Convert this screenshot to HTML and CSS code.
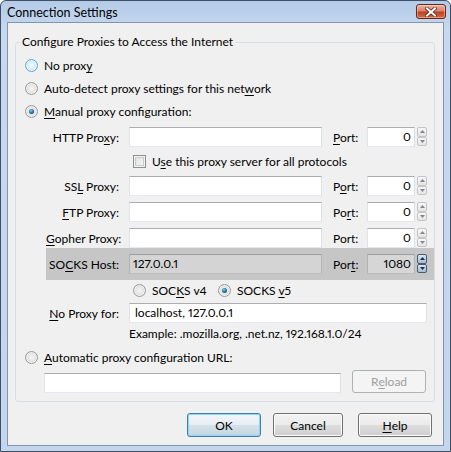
FILE: index.html
```html
<!DOCTYPE html>
<html>
<head>
<meta charset="utf-8">
<link rel="stylesheet" href="styles.css">
</head>
<body>
<div class="window">
  <div class="titlebar">
    <span class="title">Connection Settings</span>
    <span class="close">
      <svg width="12" height="10" viewBox="0 0 12 10">
        <path d="M2 1.5 L10 8.5 M10 1.5 L2 8.5" stroke="#5a2a1e" stroke-width="3.6" stroke-linecap="square"/>
        <path d="M2 1.5 L10 8.5 M10 1.5 L2 8.5" stroke="#fff" stroke-width="2" stroke-linecap="square"/>
      </svg>
    </span>
  </div>
  <div class="client">
    <fieldset class="group">
      <legend>Configure Proxies to Access the Internet</legend>
      <div class="opt"><span class="radio hot"></span><span>No prox<u>y</u></span></div>
      <div class="opt"><span class="radio"></span><span>Auto-detect proxy settings for this net<u>w</u>ork</span></div>
      <div class="opt"><span class="radio on"></span><span><u>M</u>anual proxy configuration:</span></div>

      <div class="proxies">
        <div class="prow">
          <span class="plabel">HTTP Pro<u>x</u>y:</span>
          <span class="field"></span>
          <span class="portlabel"><u>P</u>ort:</span>
          <span class="port"><span class="portbox">0</span><span class="spin"><span class="up"><svg width="5" height="3" viewBox="0 0 5 3"><path d="M0 3 L2.5 0 L5 3Z"/></svg></span><span class="down"><svg width="5" height="3" viewBox="0 0 5 3"><path d="M0 0 L5 0 L2.5 3Z"/></svg></span></span></span>
        </div>
        <div class="crow"><span class="check"></span><span>U<u>s</u>e this proxy server for all protocols</span></div>
        <div class="prow mt5">
          <span class="plabel">SS<u>L</u> Proxy:</span>
          <span class="field"></span>
          <span class="portlabel">P<u>o</u>rt:</span>
          <span class="port"><span class="portbox">0</span><span class="spin"><span class="up"><svg width="5" height="3" viewBox="0 0 5 3"><path d="M0 3 L2.5 0 L5 3Z"/></svg></span><span class="down"><svg width="5" height="3" viewBox="0 0 5 3"><path d="M0 0 L5 0 L2.5 3Z"/></svg></span></span></span>
        </div>
        <div class="prow mt6">
          <span class="plabel"><u>F</u>TP Proxy:</span>
          <span class="field"></span>
          <span class="portlabel">Po<u>r</u>t:</span>
          <span class="port"><span class="portbox">0</span><span class="spin"><span class="up"><svg width="5" height="3" viewBox="0 0 5 3"><path d="M0 3 L2.5 0 L5 3Z"/></svg></span><span class="down"><svg width="5" height="3" viewBox="0 0 5 3"><path d="M0 0 L5 0 L2.5 3Z"/></svg></span></span></span>
        </div>
        <div class="prow mt6">
          <span class="plabel"><u>G</u>opher Proxy:</span>
          <span class="field"></span>
          <span class="portlabel">Port:</span>
          <span class="port"><span class="portbox">0</span><span class="spin"><span class="up"><svg width="5" height="3" viewBox="0 0 5 3"><path d="M0 3 L2.5 0 L5 3Z"/></svg></span><span class="down"><svg width="5" height="3" viewBox="0 0 5 3"><path d="M0 0 L5 0 L2.5 3Z"/></svg></span></span></span>
        </div>
        <div class="prow socks">
          <span class="plabel">SO<u>C</u>KS Host:</span>
          <span class="field">127.0.0.1</span>
          <span class="portlabel">Por<u>t</u>:</span>
          <span class="port"><span class="portbox">1080</span><span class="spin"><span class="up"><svg width="5" height="3" viewBox="0 0 5 3"><path d="M0 3 L2.5 0 L5 3Z"/></svg></span><span class="down"><svg width="5" height="3" viewBox="0 0 5 3"><path d="M0 0 L5 0 L2.5 3Z"/></svg></span></span></span>
        </div>
        <div class="vrow">
          <span class="vitem"><span class="radio"></span><span>SOC<u>K</u>S v4</span></span>
          <span class="vitem"><span class="radio on"></span><span>SOCKS <u>v</u>5</span></span>
        </div>
        <div class="prow mt3">
          <span class="plabel"><u>N</u>o Proxy for:</span>
          <span class="field wide">localhost, 127.0.0.1</span>
        </div>
        <div class="example">Example: .mozilla.org, .net.nz, 192.168.1.0/24</div>
      </div>

      <div class="opt mt1"><span class="radio"></span><span><u>A</u>utomatic proxy configuration URL:</span></div>
      <div class="urlrow">
        <span class="field url"></span>
        <span class="btn disabled">R<u>e</u>load</span>
      </div>
    </fieldset>
    <div class="buttons">
      <span class="btn default ok">OK</span>
      <span class="btn cancel">Cancel</span>
      <span class="btn help"><u>H</u>elp</span>
    </div>
  </div>
</div>
</body>
</html>
```
FILE: styles.css
```css
* { box-sizing: border-box; }
html, body { margin: 0; padding: 0; }
body {
  width: 451px;
  height: 452px;
  overflow: hidden;
  font-family: Lato, "Noto Sans", sans-serif;
  font-size: 12px;
  font-variant-numeric: proportional-nums;
  color: #000;
  background: #fff;
}
u { text-decoration: underline; text-underline-offset: 2px; }

.window {
  width: 451px;
  height: 452px;
  border: 1px solid #3f5066;
  border-radius: 6px 6px 0 0;
  background: linear-gradient(to bottom, #b4cbe7 0px, #c6d9ef 30px, #c3d6ed 100%);
  display: flex;
  flex-direction: column;
  padding: 0 6px 5px 6px;
}
.titlebar {
  height: 21px;
  flex: none;
  display: flex;
  justify-content: space-between;
  align-items: flex-start;
  margin: 0 -6px;
  padding: 0 4px 0 6px;
}
.title { line-height: 16px; padding-top: 4px; font-size: 12.5px; }
.close {
  width: 30px;
  height: 15px;
  margin-top: 3px;
  border: 1px solid #6b2516;
  border-radius: 3px;
  background: linear-gradient(to bottom, #eab4a3 0%, #d9826a 45%, #c4401f 55%, #d46a45 100%);
  display: flex;
  align-items: center;
  justify-content: center;
  box-shadow: inset 0 0 0 1px rgba(255,255,255,0.35);
}
.close svg { display: block; }

.client {
  flex: 1;
  border: 1px solid #8196ad;
  background: #f0f0f0;
  padding: 11px 8px 0 7px;
}

.group {
  margin: 0;
  padding: 0 0 8px 0;
  border: 1px solid #d5dfe5;
  border-radius: 3px;
  min-width: 0;
}
.group legend {
  margin-left: 4px;
  padding: 0 2px;
  line-height: 16px;
}

.opt {
  display: flex;
  align-items: center;
  height: 23px;
  padding-left: 9px;
}
.opt:first-of-type { margin-top: 4px; }
.mt1 { margin-top: 1px; }
.mt3 { margin-top: 3px; }
.mt5 { margin-top: 5px; }
.mt6 { margin-top: 6px; }

.radio {
  position: relative;
  flex: none;
  width: 13px;
  height: 13px;
  margin-right: 6px;
  border-radius: 50%;
  border: 1px solid #9a9a9a;
  background: radial-gradient(circle at 50% 50%, #f6f6f6 0%, #e6e6e6 45%, #cdcdcd 75%, #bdbdbd 100%);
  box-shadow: inset 0 0 0 1px #f4f4f4;
}
.radio.hot {
  border-color: #6aa7cf;
  background: radial-gradient(circle at 50% 50%, #f2fbff 0%, #d6f0fd 45%, #aedcf4 80%, #8fc6e6 100%);
  box-shadow: inset 0 0 0 1px #e8f6fe;
}
.radio.on::after {
  content: "";
  position: absolute;
  left: 3px;
  top: 3px;
  width: 5px;
  height: 5px;
  border-radius: 50%;
  background: radial-gradient(circle at 40% 35%, #7fd0f5 0%, #2a78a8 45%, #0c3e60 100%);
}

.proxies { margin: 4px 0 0 30px; }
.prow {
  display: flex;
  align-items: center;
  height: 20px;
}
.plabel {
  width: 73px;
  flex: none;
  text-align: right;
  margin-right: 10px;
  white-space: nowrap;
}
.field {
  width: 193px;
  height: 20px;
  flex: none;
  background: #fff;
  border: 1px solid;
  border-color: #abadb3 #dbdfe6 #e3e9ef #e2e3ea;
  padding-left: 3px;
  line-height: 18px;
  white-space: nowrap;
}
.field.wide { width: 298px; padding-left: 5px; }
.field.url { width: 297px; }
.portlabel {
  margin-left: 11px;
  width: 34px;
  flex: none;
}
.port {
  display: flex;
  width: 60px;
  height: 20px;
  flex: none;
}
.portbox {
  width: 48px;
  height: 20px;
  background: #fff;
  border: 1px solid;
  border-color: #abadb3 #dbdfe6 #e3e9ef #e2e3ea;
  text-align: right;
  padding-right: 3px;
  line-height: 18px;
}
.spin {
  width: 10px;
  height: 19px;
  margin-left: 2px;
  margin-top: 0;
  display: flex;
  flex-direction: column;
}
.spin span {
  flex: 1;
  display: flex;
  align-items: center;
  justify-content: center;
  border: 1px solid #c5c5c5;
  border-radius: 2px;
  background: linear-gradient(to bottom, #f7f7f7, #e4e4e4);
}
.spin svg { display: block; fill: #7d8794; }

.crow {
  display: flex;
  align-items: center;
  height: 20px;
  margin-top: 4px;
  padding-left: 87px;
}
.check {
  width: 13px;
  height: 13px;
  flex: none;
  margin-right: 6px;
  border: 1px solid #8e8f8f;
  background: linear-gradient(135deg, #dcdcdc, #fbfbfb);
  box-shadow: inset 0 0 0 1px #f4f4f4, inset 0 0 0 2px #c8cbce;
}

.prow.socks {
  height: 32px;
  padding: 6px 0;
  background: #c6c6c6;
}
.socks .field {
  background: #d4d4d4;
  border-color: #9e9e9e #b4b4b4 #bdbdbd #b4b4b4;
}
.socks .portbox {
  background: #d6d6d6;
  border-color: #9e9e9e #b4b4b4 #bdbdbd #b4b4b4;
}
.socks .spin span {
  border-color: #4a5a6e;
  background: linear-gradient(to bottom, #d9e5f2, #a9bbcf);
}
.socks .spin svg { fill: #1b2f4a; }

.vrow {
  display: flex;
  align-items: center;
  height: 20px;
  padding-left: 87px;
}
.vitem {
  display: flex;
  align-items: center;
}
.vitem:first-child { width: 85px; }

.example {
  height: 22px;
  line-height: 22px;
  padding-left: 83px;
}

.urlrow {
  display: flex;
  align-items: flex-end;
  height: 23px;
  margin-top: 1px;
  padding-left: 28px;
}
.urlrow .field { margin-right: 11px; }

.btn {
  display: flex;
  align-items: center;
  justify-content: center;
  height: 24px;
  border: 1px solid #707070;
  border-radius: 3px;
  background: linear-gradient(to bottom, #f2f2f2 0%, #ebebeb 48%, #dddddd 52%, #cfcfcf 100%);
  box-shadow: inset 0 0 0 1px #fcfcfc;
}
.btn.disabled {
  width: 74px;
  height: 23px;
  border-color: #adb2b5;
  background: #f4f4f4;
  box-shadow: none;
  color: #a0a0a0;
}
.buttons {
  display: flex;
  justify-content: flex-end;
  margin-top: 11px;
  padding-right: 3px;
}
.btn.ok { width: 74px; margin-right: 12px; }
.btn.cancel { width: 70px; margin-right: 15px; }
.btn.help { width: 74px; }
.btn.default {
  border-color: #3c7fb1;
  box-shadow: inset 0 0 0 1px #8fd5f4;
  background: linear-gradient(to bottom, #f1f6f9 0%, #e7eef3 48%, #d5e1e9 52%, #c6d5df 100%);
}
```
